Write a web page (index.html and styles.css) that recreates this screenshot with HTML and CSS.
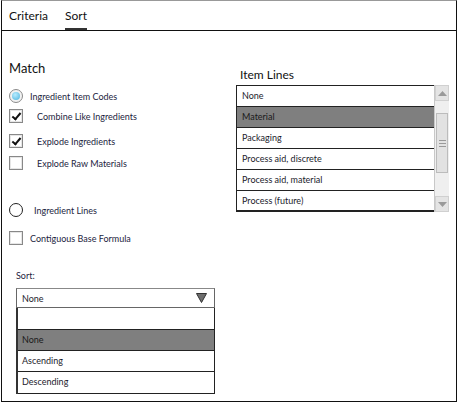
FILE: index.html
```html
<!DOCTYPE html>
<html lang="en">
<head>
    <meta charset="UTF-8">
    <title>Sort</title>
    <link rel="stylesheet" href="styles.css">
</head>
<body>
    <div class="frame">
        <div class="tabs">
            <span class="tab">Criteria</span>
            <span class="tab active">Sort</span>
        </div>
        <div class="content">
            <div class="left">
                <div class="title">Match</div>
                <div class="opt r1"><span class="radio on"></span><span class="lbl gap-s">Ingredient Item Codes</span></div>
                <div class="opt r2"><span class="check on"></span><span class="lbl gap-l">Combine Like Ingredients</span></div>
                <div class="opt r3"><span class="check on"></span><span class="lbl gap-l">Explode Ingredients</span></div>
                <div class="opt r4"><span class="check"></span><span class="lbl gap-l">Explode Raw Materials</span></div>
                <div class="opt r5"><span class="radio"></span><span class="lbl gap-m">Ingredient Lines</span></div>
                <div class="opt r6"><span class="check"></span><span class="lbl gap-s">Contiguous Base Formula</span></div>

                <div class="sort-label">Sort:</div>
                <div class="dropdown">
                    <div class="dd-head">
                        <span>None</span>
                        <svg width="11" height="10" viewBox="0 0 11 10"><path d="M0.5 0.5 H10.5 L5.5 9.5 Z" fill="#6e6e6e" stroke="#333" stroke-width="1"/></svg>
                    </div>
                    <div class="dd-list">
                        <div class="dd-row blank"></div>
                        <div class="dd-row sel">None</div>
                        <div class="dd-row">Ascending</div>
                        <div class="dd-row last">Descending</div>
                    </div>
                </div>
            </div>
            <div class="right">
                <div class="title small">Item Lines</div>
                <div class="listbox">
                    <div class="rows">
                        <div class="row">None</div>
                        <div class="row sel">Material</div>
                        <div class="row">Packaging</div>
                        <div class="row">Process aid, discrete</div>
                        <div class="row">Process aid, material</div>
                        <div class="row last">Process (future)</div>
                    </div>
                    <div class="scrollbar">
                        <div class="arrow up"><svg width="9" height="5" viewBox="0 0 9 5"><path d="M0 5 L4.5 0 L9 5 Z" fill="#9a9a9a"/></svg></div>
                        <div class="track">
                            <div class="thumb"><span></span><span></span><span></span></div>
                        </div>
                        <div class="arrow down"><svg width="9" height="5" viewBox="0 0 9 5"><path d="M0 0 L9 0 L4.5 5 Z" fill="#9a9a9a"/></svg></div>
                    </div>
                </div>
            </div>
        </div>
    </div>
</body>
</html>
```

FILE: styles.css
```css
body {
    margin: 0;
    background: #fff;
    font-family: Lato, "Open Sans", sans-serif;
    color: #1c1c2c;
}

.frame {
    width: 454px;
    height: 400px;
    margin-left: 1px;
    border: 1px solid #111;
    border-top-color: #999;
}

.tabs {
    height: 29px;
    border-bottom: 1px solid #111;
    display: flex;
    padding-left: 7px;
}

.tab {
    font-size: 12px;
    line-height: 14px;
    padding-top: 8px;
    margin-right: 17px;
    height: 20px;
    box-sizing: border-box;
    color: #111;
}

.tab.active {
    height: 29px;
    border-bottom: 2px solid #333;
}

.content {
    display: flex;
}

.left {
    width: 227px;
    padding-left: 7px;
}

.title {
    font-size: 13px;
    line-height: 16px;
    margin-top: 29px;
    color: #111;
}

.title.small {
    font-size: 12px;
    margin-top: 36px;
    margin-left: 4px;
    line-height: 16px;
}

.opt {
    display: flex;
    align-items: center;
    height: 14px;
}

.r1 { margin-top: 13px; }
.r2 { margin-top: 6px; }
.r3 { margin-top: 11px; }
.r4 { margin-top: 8px; }
.r5 { margin-top: 33px; }
.r6 { margin-top: 14px; }

.lbl {
    font-size: 9px;
    color: #1c2440;
}

.gap-s { margin-left: 7px; }
.gap-m { margin-left: 11px; }
.gap-l { margin-left: 14px; }

.radio {
    width: 14px;
    height: 14px;
    box-sizing: border-box;
    border-radius: 50%;
    border: 1px solid #222;
    display: inline-block;
    position: relative;
}

.radio.on {
    border-color: #8a8a8a;
    background: #f2f2f2;
}

.radio.on::after {
    content: '';
    position: absolute;
    left: 2px;
    top: 2px;
    width: 8px;
    height: 8px;
    border-radius: 50%;
    background: radial-gradient(circle at 40% 35%, #b8ecff, #4cb3dd);
}

.check {
    width: 14px;
    height: 14px;
    box-sizing: border-box;
    border: 1px solid #888;
    box-shadow: inset 0 0 0 1px #e6e6e6;
    display: inline-block;
    position: relative;
}

.check.on::after {
    content: '';
    position: absolute;
    left: 4px;
    top: 1px;
    width: 3px;
    height: 7px;
    border-right: 2px solid #111;
    border-bottom: 2px solid #111;
    transform: rotate(40deg);
}

.sort-label {
    font-size: 9px;
    line-height: 12px;
    margin-top: 25px;
    margin-left: 7px;
    color: #1c2440;
}

.dropdown {
    margin-top: 6px;
    margin-left: 7px;
    width: 199px;
}

.dd-head {
    height: 20px;
    box-sizing: border-box;
    border: 1px solid #666;
    border-top-color: #888;
    display: flex;
    align-items: center;
    justify-content: space-between;
    padding: 0 7px 0 5px;
    font-size: 9px;
}

.dd-list {
    border-left: 2px solid #333;
    border-right: 1px solid #222;
}

.dd-row {
    height: 21px;
    box-sizing: border-box;
    border-bottom: 1px solid #222;
    font-size: 9px;
    line-height: 20px;
    padding-left: 4px;
}

.dd-row.blank,
.dd-row.last {
    height: 22px;
}

.dd-row.sel,
.row.sel {
    background: #7f7f7f;
    color: #1a1a1a;
}

.right {
    flex: 1;
}

.listbox {
    margin-top: 2px;
    display: flex;
    width: 213px;
    height: 127px;
}

.rows {
    width: 198px;
    border: 1px solid #222;
    border-bottom-width: 2px;
    border-right: none;
}

.row {
    height: 21px;
    box-sizing: border-box;
    border-bottom: 1px solid #222;
    font-size: 9px;
    line-height: 20px;
    padding-left: 5px;
}

.row.last {
    border-bottom: none;
    height: 20px;
}

.scrollbar {
    width: 14px;
    background: #efefef;
    border-left: 1px solid #c8c8c8;
    display: flex;
    flex-direction: column;
}

.arrow {
    height: 16px;
    display: flex;
    align-items: center;
    justify-content: center;
    background: #e4e4e4;
    border: 1px solid #d0d0d0;
    box-sizing: border-box;
}

.track {
    flex: 1;
    padding-top: 12px;
}

.thumb {
    height: 60px;
    margin: 0 1px;
    background: #e2e2e2;
    border: 1px solid #bcbcbc;
    box-sizing: border-box;
    display: flex;
    flex-direction: column;
    align-items: center;
    justify-content: center;
    gap: 2px;
}

.thumb span {
    width: 7px;
    height: 1px;
    background: #999;
}
```
